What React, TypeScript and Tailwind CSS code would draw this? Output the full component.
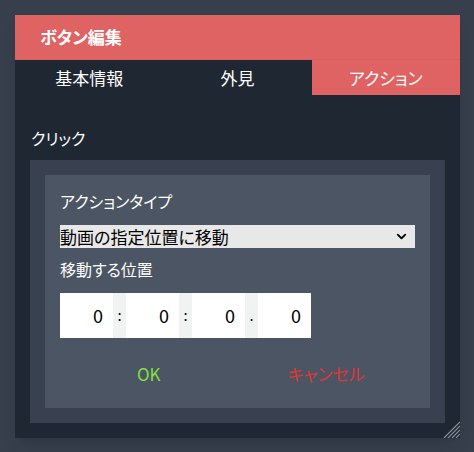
import { ChevronDown } from 'lucide-react';

const font = { fontFamily: '"Noto Sans CJK JP", "Noto Sans", sans-serif' };

const tabs = ['基本情報', '外見', 'アクション'];

function TimeField({ value }: { value: string }) {
    return (
        <div className="w-[53px] h-full bg-white flex items-center justify-end pr-[10px] text-[18px] text-black">
            {value}
        </div>
    );
}

function Sep({ ch }: { ch: string }) {
    return (
        <div className="w-[13px] h-full bg-[#f1f3f3] flex items-center justify-center text-[15px] text-black">
            {ch}
        </div>
    );
}

export default function App() {
    const active = 2;
    return (
        <div className="w-[474px] h-[452px] bg-[#373f4d] p-[15px] pb-[14px] [font-feature-settings:'palt']" style={font}>
            <div className="w-[445px] h-[423px] bg-[#1f2733] flex flex-col relative shadow-lg">
                {/* Title bar */}
                <div className="h-[45px] bg-[#e06363] flex items-center px-[25px] border-b border-dotted border-[#d05a5a]">
                    <span className="text-white font-bold text-[17px]">ボタン編集</span>
                </div>

                {/* Tabs */}
                <div className="h-[35px] flex">
                    {tabs.map((t, i) => (
                        <div
                            key={t}
                            className={`flex-1 flex items-center justify-center text-[17px] text-white ${i === active ? 'bg-[#e06363]' : ''}`}
                        >
                            {t}
                        </div>
                    ))}
                </div>

                {/* Body */}
                <div className="flex-1 px-[15px] pt-[33px] pb-[15px] flex flex-col">
                    <div className="text-white text-[16px] leading-[20px] pl-[1px]">クリック</div>
                    <div className="mt-[12px] flex-1 bg-[#394150] p-[15px]">
                        <div className="h-full bg-[#4b5563] px-[15px] pt-[16px] flex flex-col">
                            <div className="text-white text-[16px] leading-[20px]">アクションタイプ</div>
                            <div className="mt-[14px] h-[23px] w-[355px] bg-[#e8e8e8] flex items-center justify-between pr-[6px] text-black text-[17px]">
                                <span>動画の指定位置に移動</span>
                                <ChevronDown className="w-[15px] h-[15px]" strokeWidth={3} />
                            </div>
                            <div className="mt-[11px] text-white text-[16px] leading-[20px]">移動する位置</div>
                            <div className="mt-[14px] h-[45px] flex">
                                <TimeField value="0" />
                                <Sep ch=":" />
                                <TimeField value="0" />
                                <Sep ch=":" />
                                <TimeField value="0" />
                                <Sep ch="." />
                                <TimeField value="0" />
                            </div>
                            <div className="mt-[23px] w-[355px] flex text-[17px]">
                                <div className="flex-1 text-center text-[#84e040]">OK</div>
                                <div className="flex-1 text-center text-[#e03535]">キャンセル</div>
                            </div>
                        </div>
                    </div>
                </div>

                {/* Resize grip */}
                <svg className="absolute right-0 bottom-0" width="18" height="18" viewBox="0 0 18 18">
                    <path d="M18 2 L2 18 M18 6 L6 18 M18 10 L10 18 M18 14 L14 18" stroke="#8a8f98" strokeWidth="1.2" />
                </svg>
            </div>
        </div>
    );
}
